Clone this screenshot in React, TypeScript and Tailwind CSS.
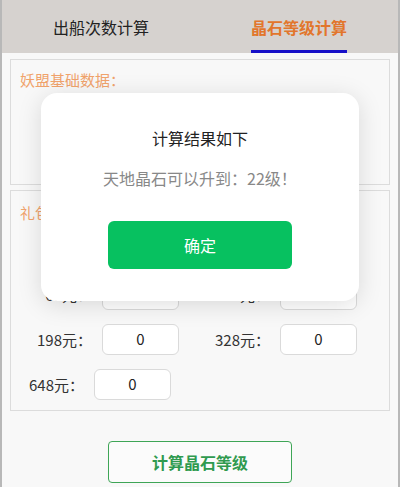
import React from "react";

const font = { fontFamily: '"Microsoft YaHei", "Noto Sans CJK SC", "Noto Sans", sans-serif' };

function PriceInput({ label, width }: { label: string; width: string }) {
  return (
    <div className={`${width} flex items-center justify-end gap-[10px]`}>
      <span className="text-[15px] leading-[20px] text-[#333]">{label}</span>
      <div className="w-[77px] h-[31px] border border-[#dadada] rounded-[6px] bg-white flex items-center justify-center text-[15px] text-[#222]">
        0
      </div>
    </div>
  );
}

export default function App() {
  return (
    <div
      style={font}
      className="relative w-[400px] h-[487px] overflow-hidden bg-[#f8f8f8] border-l-2 border-r-2 border-[#b8b8b8]"
    >
      {/* tabs */}
      <div className="h-[53px] bg-[#d6d2cf] flex">
        <div className="flex-1 flex items-center justify-center text-[16px] text-[#222]">出船次数计算</div>
        <div className="flex-1 relative flex items-center justify-center text-[16px] font-bold text-[#e2762c]">
          晶石等级计算
          <div className="absolute bottom-0 left-1/2 -translate-x-1/2 w-[96px] h-[3px] bg-[#1710c8]" />
        </div>
      </div>

      <div className="px-[8px] pt-[6px]">
        {/* section 1 */}
        <div className="h-[126px] border border-[#dcdcdc] pt-[10px] pl-[9px]">
          <div className="text-[15px] leading-[20px] text-[#f0a36c]">妖盟基础数据：</div>
        </div>

        {/* section 2 */}
        <div className="mt-[5px] border border-[#dcdcdc] pt-[12px] pb-[10px]">
          <div className="pl-[9px] text-[15px] leading-[20px] text-[#f0a36c]">礼包购买数据：</div>
          <div className="mt-[11px] flex flex-col gap-[14px]">
            <div className="flex">
              <PriceInput label="6元：" width="w-[168px]" />
              <PriceInput label="30元：" width="w-[178px]" />
            </div>
            <div className="flex">
              <PriceInput label="68元：" width="w-[168px]" />
              <PriceInput label="128元：" width="w-[178px]" />
            </div>
            <div className="flex">
              <PriceInput label="198元：" width="w-[168px]" />
              <PriceInput label="328元：" width="w-[178px]" />
            </div>
            <div className="flex">
              <PriceInput label="648元：" width="w-[160px]" />
            </div>
          </div>
        </div>

        <div className="mt-[30px] flex justify-center">
          <button className="w-[184px] h-[42px] border border-[#3ea556] rounded-[4px] bg-white/40 text-[16px] font-bold text-[#2f9a4f]">
            计算晶石等级
          </button>
        </div>
      </div>

      {/* result modal */}
      <div className="absolute left-[39px] top-[93px] w-[318px] h-[208px] bg-white rounded-[16px] shadow-[0_4px_24px_rgba(0,0,0,0.13)] flex flex-col items-center pt-[33px]">
        <div className="text-[16px] leading-[24px] text-[#222]">计算结果如下</div>
        <div className="mt-[16px] text-[16px] leading-[24px] text-[#888]">天地晶石可以升到：22级！</div>
        <button className="mt-[31px] w-[184px] h-[48px] rounded-[6px] bg-[#07c160] text-white text-[16px]">确定</button>
      </div>
    </div>
  );
}
